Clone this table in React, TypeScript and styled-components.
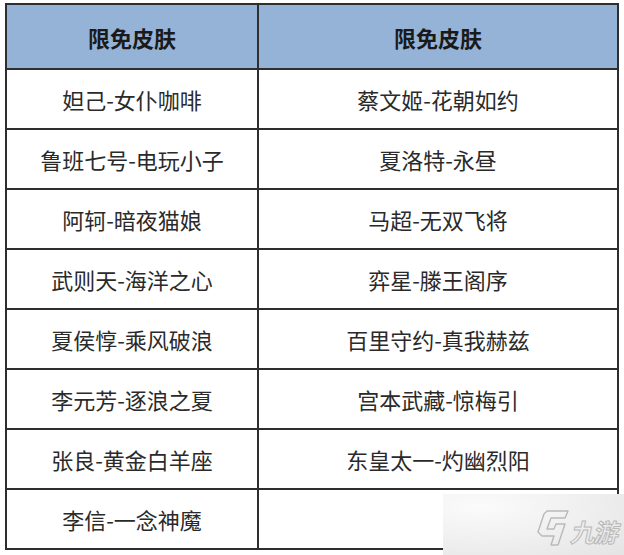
import styled, { createGlobalStyle } from "styled-components";

const rows: [string, string][] = [
  ["妲己-女仆咖啡", "蔡文姬-花朝如约"],
  ["鲁班七号-电玩小子", "夏洛特-永昼"],
  ["阿轲-暗夜猫娘", "马超-无双飞将"],
  ["武则天-海洋之心", "弈星-滕王阁序"],
  ["夏侯惇-乘风破浪", "百里守约-真我赫兹"],
  ["李元芳-逐浪之夏", "宫本武藏-惊梅引"],
  ["张良-黄金白羊座", "东皇太一-灼幽烈阳"],
  ["李信-一念神魔", ""],
];

function App() {
  return (
    <Page>
      <GlobalStyle />
      <Table>
        <thead>
          <tr>
            <HeadCell $left>限免皮肤</HeadCell>
            <HeadCell>限免皮肤</HeadCell>
          </tr>
        </thead>
        <tbody>
          {rows.map(([a, b], i) => (
            <tr key={i}>
              <Cell>{a}</Cell>
              <Cell>{b}</Cell>
            </tr>
          ))}
        </tbody>
      </Table>
      <Watermark>
        <svg width="34" height="38" viewBox="0 0 34 38" fill="none">
          <path
            d="M11 2 L32 2 L29 9 L15 9 L11 20 L18 20 L20 15 L29 15 L22 36 L15 36 L18 27 L6 27 L2 23 L8 5 Z"
            stroke="#b9b9b9"
            strokeWidth="1.4"
            strokeLinejoin="round"
          />
        </svg>
        <Brand>九游</Brand>
      </Watermark>
    </Page>
  );
}

export default App;

const GlobalStyle = createGlobalStyle`
  html, body {
    margin: 0;
    padding: 0;
    background: #ffffff;
  }
  body {
    font-family: "Noto Sans CJK SC", "Noto Sans", sans-serif;
    color: #222222;
  }
`;

const Page = styled.div`
  position: relative;
  width: 624px;
  height: 555px;
  padding: 3px 0 0 5px;
  box-sizing: border-box;
  overflow: hidden;
`;

const Table = styled.table`
  border-collapse: collapse;
  width: 614px;
  table-layout: fixed;
  border: 2px solid #2e2e2e;
`;

const HeadCell = styled.th<{ $left?: boolean }>`
  width: ${(p) => (p.$left ? "250px" : "auto")};
  height: 63px;
  padding: 0;
  background: #95b3d7;
  border: 2px solid #2e2e2e;
  font-size: 22px;
  font-weight: 700;
  color: #1a1a1a;
  text-align: center;
  vertical-align: middle;
`;

const Cell = styled.td`
  height: 58px;
  padding: 0;
  border: 2px solid #2e2e2e;
  font-size: 22px;
  font-weight: 400;
  color: #2a2a2a;
  text-align: center;
  vertical-align: middle;
`;

const Watermark = styled.div`
  position: absolute;
  left: 443px;
  top: 494px;
  right: 0;
  bottom: 0;
  display: flex;
  align-items: center;
  justify-content: flex-end;
  gap: 2px;
  padding: 6px 6px 0 0;
  box-sizing: border-box;
  background: radial-gradient(
    ellipse at 20% 20%,
    #fbfbfb 0%,
    #f1f1f1 45%,
    #e4e4e4 100%
  );
`;

const Brand = styled.span`
  font-family: "Noto Sans CJK SC", sans-serif;
  font-size: 25px;
  font-weight: 700;
  transform: skewX(-12deg);
  color: transparent;
  -webkit-text-stroke: 1px #b9b9b9;
  letter-spacing: -2px;
  line-height: 1;
  margin-top: 8px;
`;
